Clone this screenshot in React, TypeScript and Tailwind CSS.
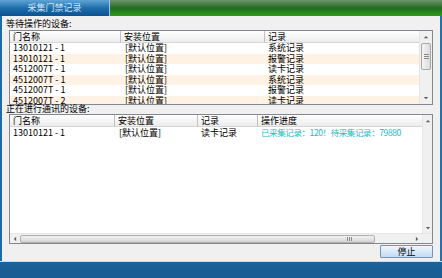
import React from 'react'

const font = "font-['Noto_Sans_CJK_SC','Noto_Sans',sans-serif]"

const waiting = [
  { name: '13010121 - 1', loc: '[默认位置]', rec: '系统记录' },
  { name: '13010121 - 1', loc: '[默认位置]', rec: '报警记录' },
  { name: '4512007T - 1', loc: '[默认位置]', rec: '读卡记录' },
  { name: '4512007T - 1', loc: '[默认位置]', rec: '系统记录' },
  { name: '4512007T - 1', loc: '[默认位置]', rec: '报警记录' },
  { name: '4512007T - 2', loc: '[默认位置]', rec: '读卡记录' },
]

const HeadCell = ({ w, children, last }: { w?: string; children?: React.ReactNode; last?: boolean }) => (
  <div
    className={`${w ?? 'flex-1'} h-full pl-[3px] leading-[12px] bg-gradient-to-b from-[#ffffff] to-[#ececec] border-b border-[#d5d5d5] ${
      last ? '' : 'border-r border-r-[#c0c0c0]'
    }`}
  >
    {children}
  </div>
)

const Arrow = ({ dir }: { dir: 'up' | 'down' | 'left' | 'right' }) => {
  const pts = {
    up: '1,4 4,1 7,4',
    down: '1,1 4,4 7,1',
    left: '4,1 1,4 4,7',
    right: '1,1 4,4 1,7',
  }[dir]
  const box = dir === 'up' || dir === 'down' ? '0 0 8 5' : '0 0 5 8'
  return (
    <svg viewBox={box} className={dir === 'up' || dir === 'down' ? 'w-[6px] h-[4px]' : 'w-[4px] h-[6px]'}>
      <polygon points={pts} fill="#606060" />
    </svg>
  )
}

export default function App() {
  return (
    <div className={`w-[442px] h-[278px] flex flex-col bg-[#f0f0f0] text-[9px] text-black ${font}`}>
      {/* title bar */}
      <div className="h-[16px] flex">
        <div className="w-[110px] h-full flex items-center justify-center text-[#cfe6fb] bg-gradient-to-b from-[#5fa4d6] via-[#1e6eab] to-[#0d5290] border-r border-[#9cc4e4]">
          采集门禁记录
        </div>
        <div className="flex-1 h-full bg-gradient-to-b from-[#6e946e] via-[#226c22] to-[#2e9c14]" />
      </div>

      {/* body */}
      <div className="flex-1 flex">
        <div className="w-[2px] bg-[#1f6ba6]" />
        <div className="flex-1 flex flex-col pt-[3px] pr-[6px]">
          <div className="pl-[4px] h-[10px] leading-[10px]">等待操作的设备:</div>
          <div className="ml-[7px] mt-[1px] h-[75px] border border-[#828790] bg-white flex">
            <div className="flex-1 flex flex-col overflow-hidden">
              <div className="h-[12px] flex shrink-0">
                <HeadCell w="w-[111px]">门名称</HeadCell>
                <HeadCell w="w-[144px]">安装位置</HeadCell>
                <HeadCell last>记录</HeadCell>
              </div>
              {waiting.map((r, i) => (
                <div
                  key={i}
                  className={`h-[10.5px] leading-[10.5px] flex shrink-0 whitespace-nowrap ${
                    i % 2 ? 'bg-[#fdf2e3]' : 'bg-white'
                  }`}
                >
                  <div className="w-[111px] pl-[3px]">{r.name}</div>
                  <div className="w-[144px] pl-[4px]">{r.loc}</div>
                  <div className="flex-1 pl-[3px]">{r.rec}</div>
                </div>
              ))}
            </div>
            <div className="w-[13px] bg-[#f0f0f0] border-l border-[#e6e6e6] flex flex-col items-center">
              <div className="h-[12px] flex items-center justify-center">
                <Arrow dir="up" />
              </div>
              <div className="w-[10px] h-[27px] rounded-[2px] border border-[#a7a7a7] bg-gradient-to-r from-[#f4f4f4] to-[#dcdcdc] flex flex-col items-center justify-center gap-[1px]">
                <div className="w-[5px] h-px bg-[#8a8a8a]" />
                <div className="w-[5px] h-px bg-[#8a8a8a]" />
                <div className="w-[5px] h-px bg-[#8a8a8a]" />
              </div>
              <div className="flex-1" />
              <div className="h-[12px] flex items-center justify-center">
                <Arrow dir="down" />
              </div>
            </div>
          </div>

          <div className="pl-[4px] h-[8px] leading-[8px]">正在进行通讯的设备:</div>
          <div className="ml-[7px] mt-[1px] h-[130px] border border-[#828790] bg-white flex flex-col">
            <div className="flex-1 flex">
              <div className="flex-1 flex flex-col">
                <div className="h-[12px] flex">
                  <HeadCell w="w-[105px]">门名称</HeadCell>
                  <HeadCell w="w-[83px]">安装位置</HeadCell>
                  <HeadCell w="w-[60px]">记录</HeadCell>
                  <HeadCell last>操作进度</HeadCell>
                </div>
                <div className="h-[11px] leading-[11px] flex whitespace-nowrap">
                  <div className="w-[105px] pl-[3px]">13010121 - 1</div>
                  <div className="w-[83px] pl-[4px]">[默认位置]</div>
                  <div className="w-[60px] pl-[3px]">读卡记录</div>
                  <div className="flex-1 pl-[3px] text-[8.5px] tracking-[-0.4px] text-[#1db8cc]">
                    已采集记录：120！待采集记录：79880
                  </div>
                </div>
              </div>
              <div className="w-[10px] bg-[#f0f0f0] border-l border-[#e6e6e6] flex flex-col items-center">
                <div className="h-[12px] flex items-center justify-center">
                  <Arrow dir="up" />
                </div>
                <div className="flex-1" />
                <div className="h-[10px] flex items-center justify-center">
                  <Arrow dir="down" />
                </div>
              </div>
            </div>
            <div className="h-[10px] flex bg-[#f0f0f0] border-t border-[#e6e6e6]">
              <div className="flex-1 flex items-center">
                <div className="w-[10px] flex items-center justify-center">
                  <Arrow dir="left" />
                </div>
                <div className="w-[355px] h-[8px] rounded-[2px] border border-[#b0b0b0] bg-gradient-to-b from-[#f2f2f2] to-[#d4d4d4] flex items-center justify-end pr-[22px] gap-[1px]">
                  <div className="w-px h-[4px] bg-[#8a8a8a]" />
                  <div className="w-px h-[4px] bg-[#8a8a8a]" />
                  <div className="w-px h-[4px] bg-[#8a8a8a]" />
                </div>
                <div className="flex-1" />
                <div className="w-[10px] flex items-center justify-center">
                  <Arrow dir="right" />
                </div>
              </div>
              <div className="w-[10px] bg-[#f0f0f0]" />
            </div>
          </div>

          <div className="flex justify-end mt-[1px]">
            <button className="w-[53px] h-[13px] leading-[11px] text-[9px] border border-[#7195c2] rounded-[1px] bg-gradient-to-b from-[#eef6fd] to-[#c3dcf2]">
              停止
            </button>
          </div>
          <div className="flex-1" />
        </div>
        <div className="w-[3px] bg-[#f0f0f0] border-r-2 border-[#2a6fa8]" />
      </div>

      {/* bottom */}
      <div className="h-[17px] border-t border-[#d8d8d8] bg-gradient-to-b from-[#1b629b] to-[#175b91]" />
    </div>
  )
}
